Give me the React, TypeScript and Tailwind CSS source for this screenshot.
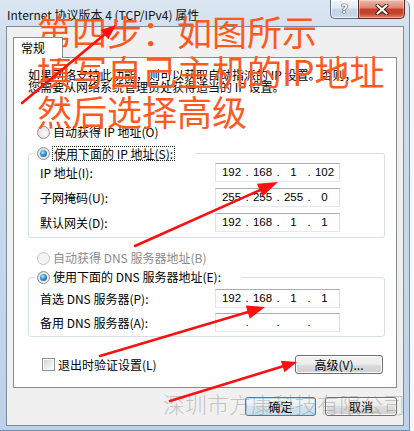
import React from "react";

const FONT = "font-['Noto_Sans_CJK_SC','Noto_Sans',sans-serif]";

function Radio({ checked, disabled }: { checked?: boolean; disabled?: boolean }) {
  return (
    <span
      className={
        disabled
          ? "inline-flex w-[13px] h-[13px] shrink-0 rounded-full border border-[#c6c6c6] bg-[#f4f4f4] items-center justify-center"
          : "inline-flex w-[13px] h-[13px] shrink-0 rounded-full border border-[#8e8f8f] bg-[radial-gradient(circle_at_60%_60%,#fbfbfb_0%,#e6e6e6_60%,#d2d2d2_100%)] items-center justify-center"
      }
    >
      {checked && (
        <span className="w-[7px] h-[7px] rounded-full bg-[radial-gradient(circle_at_40%_35%,#bfe8ff_0%,#3b98df_40%,#0d4f97_100%)]" />
      )}
    </span>
  );
}

function IPBox({ v }: { v?: [string, string, string, string] }) {
  const parts = v ?? ["", "", "", ""];
  return (
    <div className="flex items-center w-[125px] h-[19px] pl-[2px] bg-white border border-[#abadb3] border-l-[#e2e3ea] border-r-[#dbdfe6] border-b-[#e3e9ef] font-['Liberation_Sans',sans-serif] text-[11.5px] leading-[17px] text-black">
      <span className="w-[27px] text-center">{parts[0]}</span>
      <span className="w-[4px] text-center">.</span>
      <span className="w-[27px] text-center">{parts[1]}</span>
      <span className="w-[4px] text-center">.</span>
      <span className="w-[27px] text-center">{parts[2]}</span>
      <span className="w-[4px] text-center">.</span>
      <span className="w-[27px] text-center">{parts[3]}</span>
    </div>
  );
}

function Row({ label, v }: { label: string; v?: [string, string, string, string] }) {
  return (
    <div className="flex items-center h-[19px]">
      <span className="w-[175px] leading-[14px] whitespace-nowrap">{label}</span>
      <IPBox v={v} />
    </div>
  );
}

function Arrow({ x1, y1, x2, y2, hl, hw }: { x1: number; y1: number; x2: number; y2: number; hl: number; hw: number }) {
  const dx = x2 - x1;
  const dy = y2 - y1;
  const len = Math.hypot(dx, dy);
  const ux = dx / len;
  const uy = dy / len;
  const bx = x2 - ux * hl;
  const by = y2 - uy * hl;
  const px = -uy;
  const py = ux;
  const pts = `${x2},${y2} ${bx + px * hw},${by + py * hw} ${bx - px * hw},${by - py * hw}`;
  return (
    <g>
      <line x1={x1} y1={y1} x2={bx + ux * 2} y2={by + uy * 2} stroke="#ff1010" strokeWidth={2.6} strokeLinecap="round" />
      <polygon points={pts} fill="#ff1010" />
    </g>
  );
}

function WinButton({ children, def, w }: { children: React.ReactNode; def?: boolean; w: string }) {
  return (
    <div
      className={
        (def
          ? "border-[#3c7fb1] shadow-[inset_0_0_0_1px_#b6e0f8] bg-[linear-gradient(to_bottom,#f1f6f9_0%,#e6eef3_50%,#d6e3ea_50%,#cfdfe8_100%)] "
          : "border-[#707070] shadow-[inset_0_0_0_1px_#fbfbfb] bg-[linear-gradient(to_bottom,#f2f2f2_0%,#ebebeb_50%,#dddddd_50%,#cfcfcf_100%)] ") +
        w +
        " h-[19px] rounded-[3px] border flex items-center justify-center text-[12px] leading-[14px] text-black whitespace-nowrap"
      }
    >
      {children}
    </div>
  );
}

export default function App() {
  return (
    <div className={`relative w-[414px] h-[431px] overflow-hidden bg-[#f7f7f7] ${FONT} text-[12px] text-black`}>
      {/* Window */}
      <div className="flex flex-col w-[410px] h-[431px] rounded-tr-[7px] border-r border-b border-[#6f8fb5] bg-[linear-gradient(to_bottom,#dbe6f2_0%,#cfdded_10%,#c4d7ec_60%,#bcd2ea_100%)]">
        {/* Title bar */}
        <div className="flex h-[26px] items-start">
          <div className="pl-[7px] pt-[7px] text-[12px] leading-[16px] text-[#111] whitespace-nowrap">
            Internet 协议版本 4 (TCP/IPv4) 属性
          </div>
          <div className="ml-auto mr-[4px] flex">
            <div className="w-[28px] h-[19px] border border-t-0 border-r-0 border-[#5d6f86] rounded-bl-[5px] bg-[linear-gradient(to_bottom,#f3f7fb_0%,#e1e9f2_45%,#c9d7e7_50%,#c3d3e5_80%,#d3e1ef_100%)] shadow-[inset_0_0_0_1px_rgba(255,255,255,0.6)] flex items-center justify-center">
              <span className="font-['DejaVu_Sans',sans-serif] font-bold text-[12px] leading-[12px] text-white [text-shadow:0_0_1px_#2b3440,0_0_1px_#2b3440,0_0_1px_#2b3440]">?</span>
            </div>
            <div className="w-[47px] h-[19px] border border-t-0 border-[#5a2a22] rounded-br-[5px] bg-[linear-gradient(to_bottom,#ecb9ac_0%,#dc8572_45%,#c63f26_50%,#c2452d_75%,#df8a6f_100%)] shadow-[inset_0_0_0_1px_rgba(255,255,255,0.35)] flex items-center justify-center">
              <svg width="14" height="11" viewBox="0 0 14 11">
                <path d="M2.5 1.5 L11.5 9.5 M11.5 1.5 L2.5 9.5" stroke="#3a1a14" strokeWidth="4" strokeLinecap="round" />
                <path d="M2.5 1.5 L11.5 9.5 M11.5 1.5 L2.5 9.5" stroke="#ffffff" strokeWidth="2.2" strokeLinecap="round" />
              </svg>
            </div>
          </div>
        </div>

        {/* Client area */}
        <div className="ml-[6px] mr-[5px] h-[400px] border border-[#7d8a99] bg-[#f0f0f0] flex flex-col">
          <div className="mt-[10px] mx-[6px] flex flex-col">
            <div className="relative z-10 -mb-[1px] w-[50px] h-[21px] bg-white border border-b-0 border-[#898c95] pl-[7px] pt-[2px] leading-[16px]">
              常规
            </div>
            <div className="h-[331px] border border-[#898c95] bg-white flex flex-col">
              <p className="mt-[11px] ml-[14px] leading-[12px] whitespace-nowrap">
                如果网络支持此功能，则可以获取自动指派的 IP 设置。否则，
                <br />
                您需要从网络系统管理员处获得适当的 IP 设置。
              </p>

              <div className="mt-[31px] ml-[23px] h-[16px] flex items-center gap-[3px]">
                <Radio />
                <span className="leading-[14px]">自动获得 IP 地址(O)</span>
              </div>

              <fieldset className="mt-[5px] ml-[14px] w-[357px] border border-[#d5dfe5] rounded-[3px]">
                <legend className="ml-[6px] pl-[2px] pr-[20px] h-[16px] flex items-center gap-[2px]">
                  <Radio checked />
                  <span className="leading-[13px] border border-dotted border-[#222] px-[1px]">使用下面的 IP 地址(S):</span>
                </legend>
                <div className="pt-[2px] pl-[11px] pb-[5px] flex flex-col gap-[6px]">
                  <Row label="IP 地址(I):" v={["192", "168", "1", "102"]} />
                  <Row label="子网掩码(U):" v={["255", "255", "255", "0"]} />
                  <Row label="默认网关(D):" v={["192", "168", "1", "1"]} />
                </div>
              </fieldset>

              <div className="mt-[12px] ml-[23px] h-[16px] flex items-center gap-[3px]">
                <Radio disabled />
                <span className="leading-[14px] text-[#8a8a8a]">自动获得 DNS 服务器地址(B)</span>
              </div>

              <fieldset className="mt-[3px] ml-[14px] w-[357px] border border-[#d5dfe5] rounded-[3px]">
                <legend className="ml-[6px] pl-[2px] pr-[20px] h-[16px] flex items-center gap-[3px]">
                  <Radio checked />
                  <span className="leading-[14px]">使用下面的 DNS 服务器地址(E):</span>
                </legend>
                <div className="pt-[4px] pl-[11px] pb-[4px] flex flex-col gap-[5px]">
                  <Row label="首选 DNS 服务器(P):" v={["192", "168", "1", "1"]} />
                  <Row label="备用 DNS 服务器(A):" />
                </div>
              </fieldset>

              <div className="mt-[18px] flex items-center h-[19px]">
                <span className="ml-[28px] w-[13px] h-[13px] border border-[#8e8f8f] bg-white flex items-center justify-center">
                  <span className="w-[9px] h-[9px] bg-[linear-gradient(135deg,#cfd3d8_0%,#eeeeee_60%,#fafafa_100%)]" />
                </span>
                <span className="ml-[3px] leading-[14px]">退出时验证设置(L)</span>
                <div className="ml-auto mr-[13px]">
                  <WinButton w="w-[88px]">高级(V)...</WinButton>
                </div>
              </div>
            </div>
          </div>

          <div className="mt-[9px] mr-[6px] flex justify-end gap-[9px]">
            <WinButton def w="w-[71px]">确定</WinButton>
            <WinButton w="w-[72px]">取消</WinButton>
          </div>
        </div>
      </div>

      {/* Watermark */}
      <div className="absolute left-[163px] top-[391px] text-[22px] leading-[24px] font-light text-[rgba(130,130,130,0.42)] whitespace-nowrap pointer-events-none">
        深圳市方康科技有限公司
      </div>

      {/* Annotation text */}
      <div className="absolute left-[37px] top-[11px] text-[35px] leading-[40px] text-[#ff5a1e] whitespace-nowrap pointer-events-none">
        <div>第四步：如图所示</div>
        <div>填写自己主机的IP地址</div>
        <div>然后选择高级</div>
      </div>

      {/* Arrows */}
      <svg className="absolute left-0 top-0 pointer-events-none" width="414" height="431" viewBox="0 0 414 431">
        <Arrow x1={22} y1={103} x2={116} y2={25} hl={15} hw={6} />
        <Arrow x1={135} y1={246} x2={278} y2={182} hl={20} hw={7} />
        <Arrow x1={100} y1={356} x2={265} y2={307} hl={18} hw={7} />
        <Arrow x1={170} y1={401} x2={297} y2={362} hl={15} hw={6} />
        <circle cx={278} cy={412} r={1.2} fill="#ff1010" />
      </svg>
    </div>
  );
}
